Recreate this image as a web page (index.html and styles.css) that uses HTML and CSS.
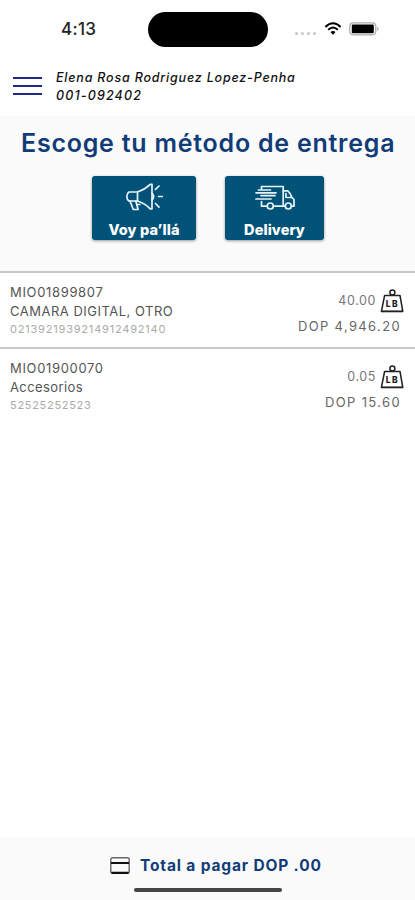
FILE: index.html
```html
<!DOCTYPE html>
<html lang="es">
<head>
<meta charset="utf-8">
<meta name="viewport" content="width=device-width, initial-scale=1">
<title>Método de entrega</title>
<link rel="stylesheet" href="styles.css">
</head>
<body>
<div class="screen">
  <div class="status">
    <span class="time">4:13</span>
    <span class="island"></span>
    <span class="dots"><i></i><i></i><i></i><i></i></span>
    <svg class="wifi" width="18" height="13" viewBox="0 0 18 14">
      <g fill="none" stroke="#000" stroke-width="2.1">
        <path d="M.8 5.3Q9-2.5 17.2 5.3"/>
        <path d="M3.8 8.3Q9 3.4 14.2 8.3"/>
      </g>
      <path d="M6.3 10.8Q9 8.6 11.7 10.8L9 13.8z"/>
    </svg>
    <svg class="battery" width="31" height="14" viewBox="0 0 31 14">
      <rect x=".8" y=".8" width="26" height="12" rx="3.5" fill="none" stroke="#aaa" stroke-width="1.2"/>
      <rect x="2.8" y="2.6" width="22" height="8.6" rx="1"/>
      <path d="M28.2 4.7q2.6 2.1 0 4.2z" fill="#aaa"/>
    </svg>
  </div>
  <header class="account">
    <div class="menu"><i></i><i></i><i></i></div>
    <div class="who">
      <div class="name">Elena Rosa Rodriguez Lopez-Penha</div>
      <div class="number">001-092402</div>
    </div>
  </header>
  <section class="delivery">
    <h1>Escoge tu método de entrega</h1>
    <div class="options">
      <div class="option pickup">
        <svg width="38" height="28" viewBox="0 0 38 28" fill="none" stroke="#e8f3fa" stroke-width="1.7" stroke-linejoin="round" stroke-linecap="round">
          <path d="M4 9h8.500v9H4q-2.200-1.500-2.200-4.500T4 9z"/>
          <path d="M12.500 9Q20 6.500 25.200 1.400h1.800v24.400h-1.800Q20 20.500 12.500 18"/>
          <path d="M5 18l3.300 8.500h4.800L10.800 18M12.300 21.500h2.500"/>
          <path d="M27 10.200q3.400 3.300 0 6.700M30.500 6.300l3.500-3.300M33.500 13.500h3.800M30.500 20.500l3.500 3.600"/>
        </svg>
        <span>Voy pa’llá</span>
      </div>
      <div class="option courier">
        <svg width="40" height="28" viewBox="0 0 40 28" fill="none" stroke="#e8f3fa" stroke-width="1.700" stroke-linejoin="round" stroke-linecap="round">
          <path d="M6.500 7V3.500h21.700v19.700h-9.600M12 23.200H6.500V18.500M3.500 7h12M1 9.800h20M6 12.600h14M1 16h15"/>
          <path d="M28.200 7.800h4.600q3 2.700 4.200 6.700l2 2v6.700h-2.200M28.200 23.200h2M31 10.500v4h5.500"/>
          <circle cx="15.300" cy="23" r="3"/>
          <circle cx="33.300" cy="23" r="3"/>
        </svg>
        <span>Delivery</span>
      </div>
    </div>
  </section>
  <main class="packages">
    <article class="package">
      <div class="info">
        <div class="code">MIO01899807</div>
        <div class="desc caps">CAMARA DIGITAL, OTRO</div>
        <div class="track long">0213921939214912492140</div>
      </div>
      <div class="cost">
        <div class="mass"><span>40.00</span>
          <svg width="24" height="24" viewBox="0 0 24 24">
            <circle cx="12.400" cy="3.400" r="2.500" class="line"/>
            <path d="M4.600 6.500h15.400l2.800 16H1.400z" class="line"/>
            <path d="M1.200 22.300h21.800" class="line"/>
            <text x="5.800" y="18" class="lb">LB</text>
          </svg>
        </div>
        <div class="price">DOP 4,946.20</div>
      </div>
    </article>
    <article class="package">
      <div class="info">
        <div class="code">MIO01900070</div>
        <div class="desc">Accesorios</div>
        <div class="track">52525252523</div>
      </div>
      <div class="cost">
        <div class="mass"><span>0.05</span>
          <svg width="24" height="24" viewBox="0 0 24 24">
            <circle cx="12.400" cy="3.400" r="2.500" class="line"/>
            <path d="M4.600 6.500h15.400l2.800 16H1.400z" class="line"/>
            <path d="M1.200 22.300h21.800" class="line"/>
            <text x="5.800" y="18" class="lb">LB</text>
          </svg>
        </div>
        <div class="price">DOP 15.60</div>
      </div>
    </article>
  </main>
  <footer class="total">
    <div class="pay">
      <svg width="20" height="17" viewBox="0 0 20 17">
        <rect x=".8" y=".8" width="18.400" height="15.400" rx="1.800" fill="none" stroke="#666" stroke-width="1.400"/>
        <path d="M1 6h18M1.500 15.800h17" stroke="#111" stroke-width="2.200"/>
      </svg>
      <span>Total a pagar DOP .00</span>
    </div>
    <div class="home"></div>
  </footer>
</div>
</body>
</html>
```
FILE: styles.css
```css
* { box-sizing: border-box; }
body { margin: 0; background: #fff; font-family: Inter, "Liberation Sans", sans-serif; }
.screen { width: 415px; height: 900px; display: flex; flex-direction: column; overflow: hidden; white-space: nowrap; }
.status { height: 58px; display: flex; align-items: center; padding-left: 61px; flex: none; }
.time { width: 87px; font-size: 17px; font-weight: 500; color: #222; letter-spacing: .3px; }
.island { width: 120px; height: 35px; border-radius: 18px; background: #000; }
.dots { display: flex; gap: 3px; margin: 9px 0 0 27px; }
.dots i { width: 3px; height: 3px; border-radius: 50%; background: #c4c4c4; }
.wifi { margin: -2px 0 0 8px; }
.battery { margin: -1px 0 0 7px; }
.account { height: 58px; display: flex; padding: 11px 0 0 13px; flex: none; }
.menu { width: 43px; display: flex; flex-direction: column; gap: 6px; padding-top: 8px; }
.menu i { width: 29px; height: 2px; background: #20298a; }
.who { font-size: 12.5px; line-height: 17.5px; font-style: italic; font-weight: 500; color: #111; }
.name { letter-spacing: .8px; }
.number { letter-spacing: 1.15px; }
.delivery { height: 155px; background: #fafafa; flex: none; }
h1 { margin: 0; padding: 12px 0 0 21px; font-size: 25px; line-height: 30px; font-weight: 600; letter-spacing: .76px; color: #123c78; }
.options { display: flex; gap: 29px; padding: 18px 0 0 92px; }
.option { height: 64px; border-radius: 3px; background: #005278; color: #fff; display: flex; flex-direction: column; align-items: center; padding-top: 7px; font-size: 14.5px; font-weight: 800; line-height: 18px; letter-spacing: .1px; box-shadow: 0 1px 3px #0006; }
.option span { margin-top: 10px; }
.pickup { width: 104px; }
.courier { width: 99px; }
.packages { flex: 1; }
.package { height: 75.5px; border-top: 2px solid #c8c8c8; display: flex; justify-content: space-between; padding: 10px 11px 0 10px; color: #555; }
.package:last-child { height: 75px; }
.code, .desc { font-size: 13px; line-height: 19px; letter-spacing: .4px; }
.code { letter-spacing: .66px; }
.caps { letter-spacing: .5px; }
.track { font-size: 11px; line-height: 17px; letter-spacing: .7px; color: #aaa; }
.long { letter-spacing: .8px; }
.cost { display: flex; flex-direction: column; align-items: flex-end; padding-top: 6px; }
.mass { display: flex; align-items: center; gap: 4px; height: 24px; font-size: 12.5px; letter-spacing: .6px; color: #777; }
.mass span { margin-top: -1px; }
.price { margin: 4px 3px 0 0; font-size: 13px; line-height: 18px; letter-spacing: 1.35px; color: #666; }
.line { fill: none; stroke: #222; stroke-width: 1.5; stroke-linejoin: round; }
.lb { font: 800 8.5px Inter, sans-serif; letter-spacing: 1.4px; fill: #222; }
.total { height: 62px; background: #fafafa; flex: none; display: flex; flex-direction: column; }
.pay { display: flex; align-items: center; gap: 10px; height: 20px; margin: 17px 0 0 110px; font-size: 15.5px; font-weight: 700; letter-spacing: .84px; color: #123c78; }
.home { width: 148px; height: 4px; border-radius: 2px; background: #444; margin: 13px 0 0 134px; }
```
